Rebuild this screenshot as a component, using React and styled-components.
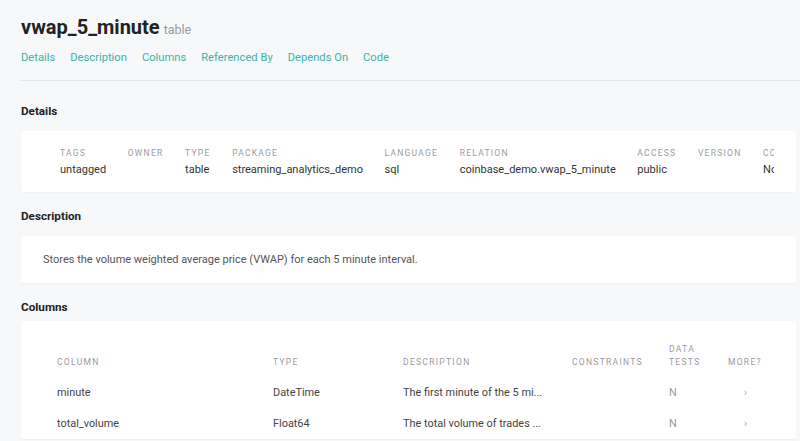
import styled, { createGlobalStyle } from "styled-components";

const GlobalStyle = createGlobalStyle`
  html, body {
    margin: 0;
    padding: 0;
    background: #f7f8fa;
    font-family: Roboto, "Liberation Sans", "Noto Sans", sans-serif;
    color: #2b2b2b;
    overflow: hidden;
  }
`;

const Page = styled.div`
  width: 800px;
  height: 441px;
  overflow: hidden;
`;

const Header = styled.div`
  padding: 15px 0 0 21px;
`;

const TitleRow = styled.div`
  display: flex;
  align-items: baseline;
  gap: 4px;
  height: 26px;
`;

const Title = styled.h1`
  margin: 0;
  font-size: 20px;
  font-weight: 700;
  color: #222;
`;

const Kind = styled.span`
  font-size: 12.5px;
  color: #9a9a9a;
`;

const Tabs = styled.nav`
  display: flex;
  gap: 15px;
  margin-top: 9px;
  padding-bottom: 14px;
  border-bottom: 1px solid #e3e5e8;
`;

const Tab = styled.a`
  font-size: 11.2px;
  color: #3cb4a9;
  text-decoration: none;
  line-height: 16px;
`;

const Body = styled.div`
  padding: 0 4px 0 21px;
`;

const SectionTitle = styled.h2`
  margin: ${(p) => p.$top}px 0 ${(p) => p.$bottom}px;
  font-size: 11.7px;
  font-weight: 700;
  line-height: 14px;
  color: #222;
`;

const Card = styled.div`
  background: #fff;
  border-radius: 3px;
  box-shadow: 0 1px 2px rgba(0, 0, 0, 0.04);
  padding: ${(p) => p.$pad};
  overflow: hidden;
`;

const MetaScroll = styled.div`
  overflow: hidden;
  padding-left: 39px;
  margin-right: 22px;
`;

const MetaList = styled.dl`
  display: flex;
  gap: 21.6px;
  margin: 0;
  white-space: nowrap;
`;

const MetaItem = styled.div`
  display: flex;
  flex-direction: column;
  gap: 2.5px;
  flex-shrink: 0;
`;

const Label = styled.dt`
  font-size: 8.5px;
  letter-spacing: 1.25px;
  text-transform: uppercase;
  color: #9b9b9b;
  line-height: 12px;
`;

const Value = styled.dd`
  margin: 0;
  font-size: 11px;
  color: #333;
  line-height: 15px;
  min-height: 15px;
`;

const DescText = styled.p`
  margin: 0;
  font-size: 11px;
  color: #555;
  line-height: 14px;
`;

const Table = styled.table`
  border-collapse: collapse;
  table-layout: fixed;
  width: 740px;
`;

const Th = styled.th`
  text-align: left;
  vertical-align: bottom;
  font-weight: 400;
  font-size: 8.5px;
  letter-spacing: 1.3px;
  color: #9b9b9b;
  line-height: 13px;
  padding: 0 0 8px;
`;

const Td = styled.td`
  font-size: 10.9px;
  color: ${(p) => (p.$muted ? "#9a9a9a" : "#444")};
  line-height: 15px;
  height: 31px;
  padding: 0;
  white-space: nowrap;
`;

const Chevron = styled.span`
  display: inline-block;
  font-size: 10px;
  color: #aaa;
  margin-left: 16px;
`;

const meta = [
  ["Tags", "untagged"],
  ["Owner", ""],
  ["Type", "table"],
  ["Package", "streaming_analytics_demo"],
  ["Language", "sql"],
  ["Relation", "coinbase_demo.vwap_5_minute"],
  ["Access", "public"],
  ["Version", ""],
  ["Contract", "Not enforced"],
];

const columns = [
  ["minute", "DateTime", "The first minute of the 5 mi..."],
  ["total_volume", "Float64", "The total volume of trades ..."],
];

const tabs = ["Details", "Description", "Columns", "Referenced By", "Depends On", "Code"];

export default function App() {
  return (
    <Page>
      <GlobalStyle />
      <Header>
        <TitleRow>
          <Title>vwap_5_minute</Title>
          <Kind>table</Kind>
        </TitleRow>
        <Tabs>
          {tabs.map((t) => (
            <Tab key={t} href="#">
              {t}
            </Tab>
          ))}
        </Tabs>
      </Header>
      <Body>
        <SectionTitle $top={23} $bottom={13}>Details</SectionTitle>
        <Card $pad="16px 0 15.5px 0">
          <MetaScroll>
            <MetaList>
              {meta.map(([k, v]) => (
                <MetaItem key={k}>
                  <Label>{k}</Label>
                  <Value>{v}</Value>
                </MetaItem>
              ))}
            </MetaList>
          </MetaScroll>
        </Card>
        <SectionTitle $top={17} $bottom={13}>Description</SectionTitle>
        <Card $pad="16.5px 22px 16.5px">
          <DescText>
            Stores the volume weighted average price (VWAP) for each 5 minute interval.
          </DescText>
        </Card>
        <SectionTitle $top={17} $bottom={7}>Columns</SectionTitle>
        <Card $pad="21.5px 0 0 36px">
          <Table>
            <colgroup>
              <col style={{ width: 216 }} />
              <col style={{ width: 130 }} />
              <col style={{ width: 169 }} />
              <col style={{ width: 97 }} />
              <col style={{ width: 59 }} />
              <col style={{ width: 69 }} />
            </colgroup>
            <thead>
              <tr>
                <Th>COLUMN</Th>
                <Th>TYPE</Th>
                <Th>DESCRIPTION</Th>
                <Th>CONSTRAINTS</Th>
                <Th>
                  DATA
                  <br />
                  TESTS
                </Th>
                <Th>MORE?</Th>
              </tr>
            </thead>
            <tbody>
              {columns.map(([name, type, desc]) => (
                <tr key={name}>
                  <Td>{name}</Td>
                  <Td>{type}</Td>
                  <Td>{desc}</Td>
                  <Td />
                  <Td $muted>N</Td>
                  <Td $muted>
                    <Chevron>›</Chevron>
                  </Td>
                </tr>
              ))}
            </tbody>
          </Table>
        </Card>
      </Body>
    </Page>
  );
}
